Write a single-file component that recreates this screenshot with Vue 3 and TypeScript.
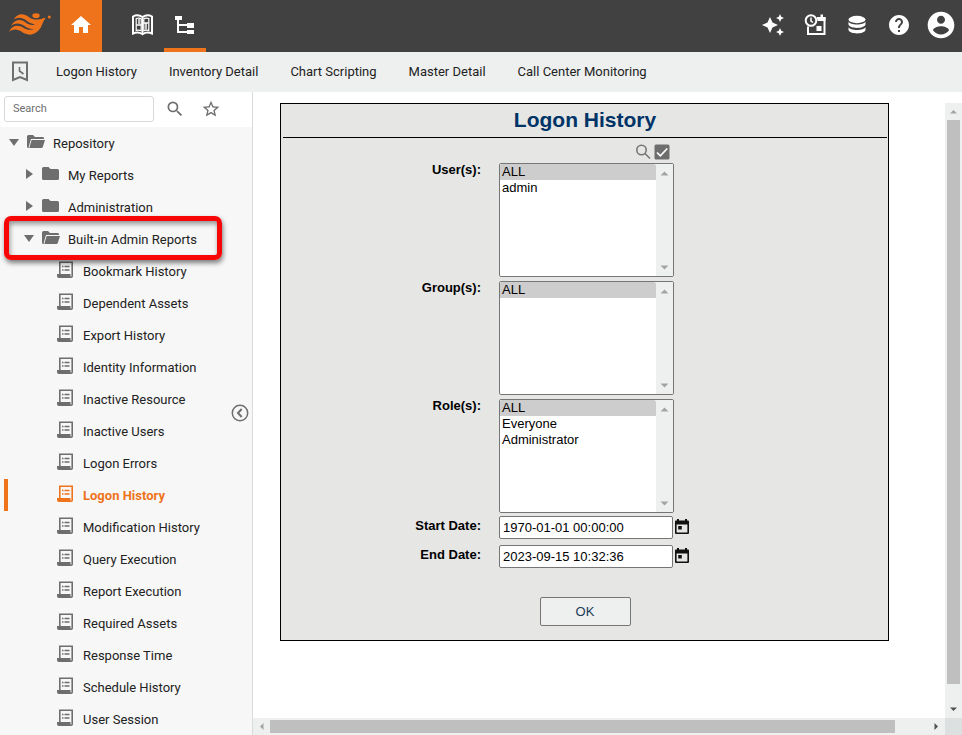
<script setup lang="ts">
import { ref } from 'vue'

interface TreeNode {
  label: string
  level: number
  kind: 'open' | 'closed' | 'report'
  marked?: boolean
}

interface ListField {
  id: string
  label: string
  options: string[]
}

const shortcuts: string[] = [
  'Logon History',
  'Inventory Detail',
  'Chart Scripting',
  'Master Detail',
  'Call Center Monitoring',
]

const reports: string[] = [
  'Bookmark History',
  'Dependent Assets',
  'Export History',
  'Identity Information',
  'Inactive Resource',
  'Inactive Users',
  'Logon Errors',
  'Logon History',
  'Modification History',
  'Query Execution',
  'Report Execution',
  'Required Assets',
  'Response Time',
  'Schedule History',
  'User Session',
]

const nodes: TreeNode[] = [
  { label: 'Repository', level: 0, kind: 'open' },
  { label: 'My Reports', level: 1, kind: 'closed' },
  { label: 'Administration', level: 1, kind: 'closed' },
  { label: 'Built-in Admin Reports', level: 1, kind: 'open', marked: true },
  ...reports.map((label): TreeNode => ({ label, level: 2, kind: 'report' })),
]

const lists: ListField[] = [
  { id: 'users', label: 'User(s):', options: ['ALL', 'admin'] },
  { id: 'groups', label: 'Group(s):', options: ['ALL'] },
  { id: 'roles', label: 'Role(s):', options: ['ALL', 'Everyone', 'Administrator'] },
]

const active = ref('Logon History')
const search = ref('')
const chosen = ref<Record<string, string[]>>({ users: ['ALL'], groups: ['ALL'], roles: ['ALL'] })
const startDate = ref('1970-01-01 00:00:00')
const endDate = ref('2023-09-15 10:32:36')
</script>

<template>
  <div class="app">
    <header class="topbar">
      <a class="logo" href="#" aria-label="Start">
        <svg width="44" height="24" viewBox="24 36 132 72" fill="#ee731b">
          <path d="M41 58C54 38 72 40 86 51C100 61 116 61 136 53C133 60 129 65 124 69C108 75 92 72 80 62C66 52 54 51 41 58Z" />
          <path d="M33 77C46 58 62 56 76 67C90 78 106 77 126 66L121 84C104 90 86 88 74 79C60 68 48 68 33 77Z" />
          <path d="M27 95C36 75 54 73 70 83C84 92 100 91 121 82C114 97 102 103 90 104C78 104 70 99 62 93C50 86 38 87 27 95Z" />
          <path d="M104 64L136 53C128 66 126 80 116 91L100 94Z" />
          <ellipse cx="108" cy="47" rx="11" ry="7" />
          <circle cx="148" cy="51" r="4.5" />
        </svg>
      </a>
      <button class="tab home" type="button" aria-label="Home">
        <svg width="24" height="24" viewBox="0 0 24 24" fill="#fff"><path d="M10 20v-6h4v6h5v-8h3L12 3 2 12h3v8z" /></svg>
      </button>
      <button class="tab" type="button" aria-label="Catalog">
        <svg width="24" height="24" viewBox="0 0 24 24" fill="none" stroke="#fff">
          <path d="M2 3.500c3-1.700 6.500-1.500 9.500.5 3-2 6.500-2.200 9.500-.5v17c-3-1.300-6.500-1.300-9.500.7-3-2-6.500-2-9.500-.7z" stroke-width="2" />
          <path d="M5.200 5.500c2-.7 3.800-.5 5 .3v12c-1.300-.8-3-1-5-.4zM17.800 5.500c-2-.7-3.800-.5-5 .3v12c1.300-.8 3-1 5-.4z" stroke-width="1.200" />
          <path d="M11.500 4v17" stroke-width="1.600" />
          <path d="M5.500 12h5M8 6v5M12.500 10h5M15 10.500v6" stroke-width="1.400" />
        </svg>
      </button>
      <button class="tab current" type="button" aria-label="Repository">
        <svg width="24" height="24" viewBox="0 0 24 24" fill="#fff">
          <path d="M2 3h7v4H6v4h8v-1h7v5h-7v-2H6v5h8v-1h7v4h-7v-1H4V7H2z" />
        </svg>
      </button>
      <div class="spacer"></div>
      <button class="tab" type="button" aria-label="Assistant">
        <svg width="24" height="24" viewBox="0 0 24 24" fill="#fff">
          <path d="m19 9 1.250-2.750L23 5l-2.750-1.250L19 1l-1.250 2.750L15 5l2.750 1.250zm-7.500.5L9 4 6.500 9.500 1 12l5.500 2.500L9 20l2.500-5.500L17 12zM19 15l-1.250 2.750L15 19l2.750 1.250L19 23l1.250-2.750L23 19l-2.750-1.250z" />
        </svg>
      </button>
      <button class="tab" type="button" aria-label="Schedule">
        <svg width="24" height="24" viewBox="0 0 24 24" fill="none" stroke="#fff" stroke-width="2">
          <path d="M5 13.500V21h16.500V5H14" />
          <path d="M14 4h8.500v4H14.500zM17.500 1.500H20V4h-2.500z" fill="#fff" stroke="none" />
          <circle cx="8" cy="7.500" r="5.300" />
          <path d="M8 4.500V8l2 1.500" stroke-width="1.500" />
          <path d="M13.500 13h5v5h-5z" fill="#fff" stroke="none" />
        </svg>
      </button>
      <button class="tab" type="button" aria-label="Data sources">
        <svg width="24" height="24" viewBox="0 0 24 24" fill="#fff">
          <ellipse cx="12" cy="6.500" rx="8.500" ry="3.700" />
          <path d="M3.500 8.500c1 4 16 4 17 0v3c-1 4.500-16 4.500-17 0zM3.500 14c1 4 16 4 17 0v3c-1 4.500-16 4.500-17 0z" />
        </svg>
      </button>
      <button class="tab" type="button" aria-label="Help">
        <svg width="24" height="24" viewBox="0 0 24 24" fill="#fff">
          <path d="M12 2C6.480 2 2 6.480 2 12s4.480 10 10 10 10-4.480 10-10S17.520 2 12 2zm1 17h-2v-2h2v2zm2.070-7.750-.9.920C13.450 12.900 13 13.500 13 15h-2v-.5c0-1.100.45-2.100 1.170-2.830l1.240-1.260c.37-.36.59-.86.59-1.410 0-1.100-.9-2-2-2s-2 .9-2 2H8c0-2.210 1.790-4 4-4s4 1.790 4 4c0 .88-.36 1.680-.93 2.250z" />
        </svg>
      </button>
      <button class="tab" type="button" aria-label="Account">
        <svg width="32" height="32" viewBox="0 0 24 24" fill="#fff">
          <path d="M12 2C6.480 2 2 6.480 2 12s4.480 10 10 10 10-4.480 10-10S17.520 2 12 2zm0 3c1.660 0 3 1.340 3 3s-1.340 3-3 3-3-1.340-3-3 1.340-3 3-3zm0 14.200c-2.500 0-4.710-1.280-6-3.220.03-1.990 4-3.080 6-3.080 1.990 0 5.970 1.090 6 3.080-1.290 1.940-3.500 3.220-6 3.220z" />
        </svg>
      </button>
    </header>

    <nav class="shortcuts">
      <button class="plain" type="button" aria-label="Recent bookmarks">
        <svg width="18" height="22" viewBox="0 0 18 22" fill="none" stroke="#6e6e6e" stroke-width="2">
          <path d="M2 1.500h14v17.500l-7-3-7 3z" />
          <path d="M8.500 6v4l4 3" stroke-width="1.600" />
        </svg>
      </button>
      <a v-for="item in shortcuts" :key="item" href="#">{{ item }}</a>
    </nav>

    <div class="body">
      <aside class="sidebar">
        <div class="search-row">
          <input v-model="search" type="text" placeholder="Search" aria-label="Search" />
          <button class="plain" type="button" aria-label="Find">
            <svg width="20" height="20" viewBox="0 0 24 24" fill="#6e6e6e">
              <path d="M15.500 14h-.79l-.28-.27A6.470 6.470 0 0 0 16 9.500 6.500 6.500 0 1 0 9.500 16c1.610 0 3.090-.59 4.230-1.570l.27.28v.79l5 4.990L20.490 19l-4.990-5zm-6 0C7.010 14 5 11.990 5 9.500S7.010 5 9.500 5 14 7.010 14 9.500 11.990 14 9.500 14z" />
            </svg>
          </button>
          <button class="plain star" type="button" aria-label="Favorites">
            <svg width="20" height="20" viewBox="0 0 24 24" fill="#6e6e6e">
              <path d="m22 9.240-7.190-.62L12 2 9.190 8.630 2 9.240l5.460 4.730L5.820 21 12 17.270 18.180 21l-1.630-7.030L22 9.240zM12 15.400l-3.760 2.270 1-4.280-3.320-2.880 4.380-.38L12 6.100l1.710 4.040 4.380.38-3.320 2.880 1 4.280L12 15.400z" />
            </svg>
          </button>
        </div>
        <ul class="tree">
          <li v-for="node in nodes" :key="node.label">
            <button
              type="button"
              class="node"
              :class="['level-' + node.level, { selected: node.label === active }]"
              @click="active = node.label"
            >
              <span class="twist">
                <svg v-if="node.kind === 'open'" width="10" height="8" viewBox="0 0 10 8" fill="#6e6e6e"><path d="M0 1h10L5 8z" /></svg>
                <svg v-else-if="node.kind === 'closed'" width="8" height="10" viewBox="0 0 8 10" fill="#6e6e6e"><path d="M1 0v10l7-5z" /></svg>
              </span>
              <span class="icon">
                <svg v-if="node.kind === 'open'" width="18" height="14" viewBox="0 0 18 14" fill="#6e6e6e">
                  <path d="M0 1.500Q0 0 1.500 0h4.500l2 2h8q1 0 1 1.500V4H4L1.800 11.500V13H1.500Q0 13 0 11.500z" />
                  <path d="M4.600 5H18l-2.200 7q-.3 1-1.300 1H2.300z" />
                </svg>
                <svg v-else-if="node.kind === 'closed'" width="18" height="14" viewBox="0 0 18 14" fill="#6e6e6e">
                  <path d="M0 1.500Q0 0 1.500 0h5l2 2h7Q17 2 17 3.500v8q0 1.500-1.500 1.500h-14Q0 13 0 11.500z" />
                </svg>
                <svg v-else width="17" height="18" viewBox="0 0 17 18" fill="none" stroke="currentColor" stroke-width="1.600">
                  <path d="M2.800 13V1.300h12.400v13.900q0 1-1 1h-1.500V13" />
                  <path d="M0 13h13v4H2q-2 0-2-2z" fill="currentColor" stroke="none" />
                  <path d="M5 5.500h1.500M7.500 5.500h5M5 9h1.500M7.500 9h5" stroke-width="1.500" />
                </svg>
              </span>
              <span class="text">{{ node.label }}</span>
              <span v-if="node.marked" class="marker"></span>
            </button>
          </li>
        </ul>
        <button class="plain collapse" type="button" aria-label="Collapse">
          <svg width="18" height="18" viewBox="0 0 18 18" fill="none" stroke="#6e6e6e">
            <circle cx="9" cy="9" r="7.700" stroke-width="1.500" />
            <path d="M10.700 5 7 9l3.700 4" stroke-width="2" />
          </svg>
        </button>
      </aside>

      <main class="viewer">
        <div class="pane">
          <form class="panel" @submit.prevent>
            <h1>Logon History</h1>
            <div class="fields">
              <div class="tools">
                <button class="plain" type="button" aria-label="Search users">
                  <svg width="16" height="16" viewBox="0 0 16 16" fill="none" stroke="#767676" stroke-width="1.600">
                    <circle cx="6.500" cy="6" r="4.700" /><path d="m10 9.500 5 5" />
                  </svg>
                </button>
                <button class="plain" type="button" aria-label="Select all users">
                  <svg width="16" height="16" viewBox="0 0 16 16">
                    <rect x="0.500" y="0.500" width="15" height="15" rx="1.500" fill="#6e6e6e" />
                    <path d="m3 8.500 3.300 3.300L13.300 4.500" fill="none" stroke="#fff" stroke-width="1.700" />
                  </svg>
                </button>
              </div>
              <div v-for="list in lists" :key="list.id" class="field">
                <label :for="list.id">{{ list.label }}</label>
                <div class="listbox">
                  <select :id="list.id" v-model="chosen[list.id]" multiple size="7">
                    <option v-for="option in list.options" :key="option" :value="option">{{ option }}</option>
                  </select>
                  <span class="rail">
                    <svg width="9" height="5" viewBox="0 0 9 5" fill="#a3a3a3"><path d="M.5 4.500 4.500.5 8.500 4.500z" /></svg>
                    <svg width="9" height="5" viewBox="0 0 9 5" fill="#a3a3a3"><path d="M.5.5h8l-4 4z" /></svg>
                  </span>
                </div>
              </div>
              <div class="field date">
                <label for="start">Start Date:</label>
                <div class="date-box">
                  <input id="start" v-model="startDate" type="text" />
                  <button class="plain" type="button" aria-label="Pick start date">
                    <svg width="14" height="16" viewBox="0 0 14 16"><path d="M2 0h2v1.500h6V0h2v1.500h1q1 0 1 1V14q0 1-1 1H1q-1 0-1-1V2.500q0-1 1-1h1zM1.600 5.500v7.900h10.800V5.500zM3.200 7h3.600v3.500H3.200z" fill-rule="evenodd" fill="#111" /></svg>
                  </button>
                </div>
              </div>
              <div class="field date">
                <label for="end">End Date:</label>
                <div class="date-box">
                  <input id="end" v-model="endDate" type="text" />
                  <button class="plain" type="button" aria-label="Pick end date">
                    <svg width="14" height="16" viewBox="0 0 14 16"><path d="M2 0h2v1.500h6V0h2v1.500h1q1 0 1 1V14q0 1-1 1H1q-1 0-1-1V2.500q0-1 1-1h1zM1.600 5.500v7.900h10.800V5.500zM3.200 7h3.600v3.500H3.200z" fill-rule="evenodd" fill="#111" /></svg>
                  </button>
                </div>
              </div>
            </div>
            <button class="ok" type="submit">OK</button>
          </form>
        </div>
        <div class="bar vertical">
          <svg width="9" height="5" viewBox="0 0 9 5" fill="#a3a3a3"><path d="M1 4.500 4.500 1 8 4.500z" /></svg>
          <div class="track"><div class="thumb"></div></div>
          <svg width="9" height="5" viewBox="0 0 9 5" fill="#505050"><path d="M1 .5h7L4.500 4z" /></svg>
        </div>
        <div class="bar horizontal">
          <svg width="5" height="9" viewBox="0 0 5 9" fill="#a3a3a3"><path d="M4.500 1 1 4.500 4.500 8z" /></svg>
          <div class="track"><div class="thumb"></div></div>
          <svg width="5" height="9" viewBox="0 0 5 9" fill="#505050"><path d="M.5 1 4 4.500.5 8z" /></svg>
        </div>
        <div class="corner"></div>
      </main>
    </div>
  </div>
</template>

<style>
body {
  margin: 0;
}
</style>

<style scoped>
.app {
  display: flex;
  flex-direction: column;
  height: 100vh;
  overflow: hidden;
  background: #fff;
  color: #222;
  font: 13px/16px Roboto, "Liberation Sans", sans-serif;
}

.app *,
.app *::before {
  box-sizing: border-box;
}

button {
  font: inherit;
  color: inherit;
  cursor: pointer;
}

svg {
  display: block;
  flex: none;
}

.plain {
  display: flex;
  padding: 0;
  border: 0;
  background: none;
}

.topbar {
  display: flex;
  flex: none;
  height: 52px;
  background: #414141;
}

.logo {
  display: flex;
  align-items: center;
  width: 60px;
  padding: 0 8px 4px;
}

.tab {
  display: flex;
  align-items: center;
  justify-content: center;
  width: 42px;
  padding: 0 0 2px;
  border: 0;
  background: none;
}

.home {
  margin-right: 20px;
  background: #ee731b;
}

.current {
  box-shadow: inset 0 -4px #ee731b;
}

.spacer {
  flex: 1;
}

.shortcuts {
  display: flex;
  flex: none;
  align-items: center;
  gap: 32px;
  height: 40px;
  padding-left: 11px;
  background: #eef0f0;
}

.shortcuts .plain {
  margin-right: -5px;
}

.shortcuts a {
  color: #222;
  text-decoration: none;
  white-space: nowrap;
}

.body {
  display: flex;
  flex: 1;
  min-height: 0;
}

.sidebar {
  position: relative;
  display: flex;
  flex: none;
  flex-direction: column;
  width: 253px;
  border-right: 1px solid #d9dcdc;
}

.search-row {
  display: flex;
  flex: none;
  align-items: center;
  height: 35px;
  padding: 0 0 2px 4px;
}

.search-row input {
  width: 150px;
  height: 26px;
  margin-right: 11px;
  padding: 0 8px;
  border: 1px solid #d5d9d9;
  border-radius: 3px;
  font: 11px/16px Roboto, "Liberation Sans", sans-serif;
}

.search-row input::placeholder {
  color: #6e6e6e;
}

.star {
  margin-left: 16px;
}

.tree {
  flex: 1;
  margin: 0;
  padding: 0;
  list-style: none;
  background: #f7f7f7;
}

.node {
  position: relative;
  display: flex;
  align-items: center;
  width: 100%;
  height: 32px;
  padding: 2px 0 0;
  border: 0;
  background: none;
  text-align: left;
}

.level-0 {
  padding-left: 4px;
}

.level-1 {
  padding-left: 19px;
}

.level-2 {
  padding-left: 34px;
}

.twist,
.icon {
  display: flex;
  justify-content: center;
  width: 20px;
  padding-bottom: 4px;
}

.icon {
  width: 23px;
  color: #6e6e6e;
}

.text {
  margin-left: 6px;
}

.selected {
  color: #ee731b;
  font-weight: 700;
}

.selected .icon {
  color: #ee731b;
}

.selected::before {
  content: "";
  position: absolute;
  top: 0;
  bottom: 0;
  left: 4px;
  width: 4px;
  background: #ee731b;
}

.marker {
  position: absolute;
  z-index: 1;
  top: -7px;
  right: 30px;
  bottom: -5px;
  left: 4px;
  border: 5px solid #f80606;
  border-radius: 7px;
  box-shadow: 1px 3px 5px rgba(0, 0, 0, 0.5), inset 1px 3px 5px rgba(0, 0, 0, 0.4);
}

.collapse {
  position: absolute;
  top: 50%;
  right: 3px;
  margin-top: -10px;
}

.viewer {
  display: grid;
  flex: 1;
  grid-template-columns: 1fr 17px;
  grid-template-rows: 1fr 17px;
  min-width: 0;
  padding-top: 11px;
  font-family: "Liberation Sans", Arial, sans-serif;
}

.pane {
  min-height: 0;
  padding: 0 56px 0 27px;
  overflow: hidden;
}

.panel {
  padding: 0 1px 14px 2px;
  border: 1px solid #000;
  background: #e6e6e4;
  color: #000;
}

h1 {
  margin: 0;
  padding: 4px 0 5px;
  border-bottom: 1px solid #000;
  color: #036;
  font-size: 21px;
  line-height: 24px;
  text-align: center;
}

.fields {
  display: flex;
  flex-direction: column;
  gap: 4px;
  margin-right: 4px;
  padding-top: 6px;
}

.tools {
  display: flex;
  gap: 3px;
  margin-bottom: -1px;
  margin-left: 33%;
  padding-left: 154px;
}

.field {
  display: grid;
  grid-template-columns: 33% 1fr;
  gap: 18px;
}

.field label {
  margin-top: -1px;
  font-weight: 700;
  text-align: right;
}

.listbox {
  display: flex;
  width: 175px;
  height: 114px;
  overflow: hidden;
  border: 1px solid #767676;
  border-radius: 2px;
  background: #fff;
}

.listbox select {
  flex: 1;
  min-width: 0;
  height: 112px;
  padding: 0;
  overflow: hidden;
  border: 0;
  outline: 0;
  background: #fff;
  color: #000;
  font: 13px/16px "Liberation Sans", Arial, sans-serif;
}

.listbox option {
  height: 16px;
  min-height: 16px;
  padding: 0 2px;
}

.listbox option:checked {
  background: linear-gradient(#cdcdcd, #cdcdcd);
  color: #000;
}

.rail {
  display: flex;
  flex-direction: column;
  align-items: center;
  justify-content: space-between;
  width: 17px;
  padding: 7px 0 6px;
  background: #eef0f0;
}

.date {
  height: 25px;
}

.date label {
  padding-top: 2px;
}

.date-box {
  display: flex;
  align-items: center;
  gap: 2px;
  height: 23px;
  margin-top: -1px;
}

.date-box .plain {
  padding-bottom: 1px;
}

.date-box input {
  width: 174px;
  height: 23px;
  padding: 0 3px;
  border: 1px solid #767676;
  border-radius: 2px;
  font: 13px/16px "Liberation Sans", Arial, sans-serif;
}

.ok {
  display: block;
  width: 91px;
  height: 29px;
  margin: 26px auto 0;
  padding: 0;
  border: 1px solid #767676;
  border-radius: 2px;
  background: #eef0f0;
  color: #1c3a56;
}

.bar {
  display: flex;
  align-items: center;
  justify-content: space-between;
  background: #eef0f0;
}

.vertical {
  flex-direction: column;
  padding: 6px 0;
}

.horizontal {
  padding: 0 6px;
}

.track {
  flex: 1;
}

.vertical .track {
  width: 13px;
  margin: 6px 0;
}

.horizontal .track {
  height: 13px;
  margin: 0 6px;
}

.thumb {
  background: #bfbfbf;
}

.vertical .thumb {
  height: 97%;
}

.horizontal .thumb {
  width: 95%;
  height: 100%;
}

.corner {
  background: #dce0e0;
}
</style>
